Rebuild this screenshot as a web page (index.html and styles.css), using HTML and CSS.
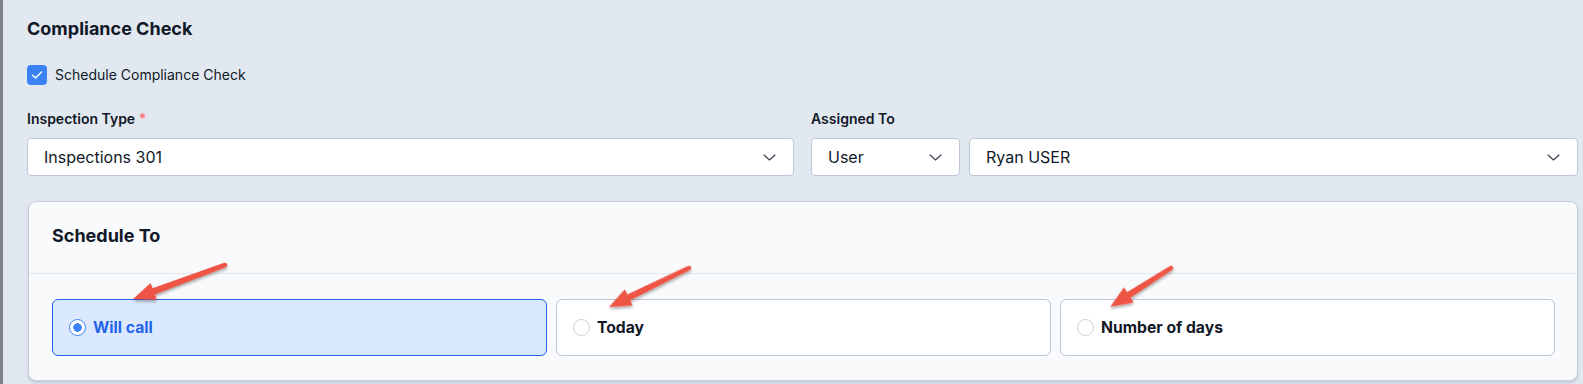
FILE: index.html
```html
<!DOCTYPE html>
<html lang="en">
<head>
    <meta charset="UTF-8">
    <title>Compliance Check</title>
    <link rel="stylesheet" href="styles.css">
</head>
<body>
    <div class="page">
        <h2 class="title">Compliance Check</h2>

        <label class="check-row">
            <span class="checkbox">
                <svg width="12" height="10" viewBox="0 0 12 10"><path d="M1.5 5.2 L4.6 8 L10.5 2" fill="none" stroke="#fff" stroke-width="1.4" stroke-linecap="round" stroke-linejoin="round"/></svg>
            </span>
            Schedule Compliance Check
        </label>

        <div class="fields">
            <div class="field">
                <div class="field-label">Inspection Type <span class="req">*</span></div>
                <div class="select">
                    <span>Inspections 301</span>
                    <svg class="chev" width="13" height="7" viewBox="0 0 13 7"><path d="M0.7 0.7 L6.5 6 L12.3 0.7" fill="none" stroke="#374151" stroke-width="1.2"/></svg>
                </div>
            </div>
            <div class="field">
                <div class="field-label">Assigned To</div>
                <div class="assign">
                    <div class="select select-small">
                        <span>User</span>
                        <svg class="chev" width="13" height="7" viewBox="0 0 13 7"><path d="M0.7 0.7 L6.5 6 L12.3 0.7" fill="none" stroke="#374151" stroke-width="1.2"/></svg>
                    </div>
                    <div class="select select-grow">
                        <span>Ryan USER</span>
                        <svg class="chev" width="13" height="7" viewBox="0 0 13 7"><path d="M0.7 0.7 L6.5 6 L12.3 0.7" fill="none" stroke="#374151" stroke-width="1.2"/></svg>
                    </div>
                </div>
            </div>
        </div>

        <div class="card">
            <div class="card-head">Schedule To</div>
            <div class="card-body">
                <div class="option active">
                    <span class="radio"></span>
                    <span>Will call</span>
                </div>
                <div class="option">
                    <span class="radio"></span>
                    <span>Today</span>
                </div>
                <div class="option">
                    <span class="radio"></span>
                    <span>Number of days</span>
                </div>
            </div>
        </div>
    </div>

    <!-- annotation arrows drawn over the screenshot, tail at origin pointing along +x -->
    <svg class="arrows" width="1583" height="384" viewBox="0 0 1583 384">
        <defs>
            <filter id="shadow" x="-20%" y="-40%" width="140%" height="180%">
                <feDropShadow dx="0" dy="2" stdDeviation="1.6" flood-color="#000" flood-opacity="0.35"/>
            </filter>
        </defs>
        <g filter="url(#shadow)" fill="#ef5445">
            <path transform="translate(225 265) rotate(159.7)" d="M0 -2.3 L76 -3.3 L76 -9 L98 0 L76 9 L76 3.3 L0 2.3 A2.3 2.3 0 0 1 0 -2.3 Z"/>
            <path transform="translate(689 268) rotate(154)" d="M0 -2.3 L67 -3.3 L67 -9 L89 0 L67 9 L67 3.3 L0 2.3 A2.3 2.3 0 0 1 0 -2.3 Z"/>
            <path transform="translate(1171 268) rotate(147.4)" d="M0 -2.3 L50 -3.3 L50 -9 L72 0 L50 9 L50 3.3 L0 2.3 A2.3 2.3 0 0 1 0 -2.3 Z"/>
        </g>
    </svg>
</body>
</html>
```

FILE: styles.css
```css
body {
    margin: 0;
    background-color: #e2e8f0;
    font-family: Inter, "Noto Sans", sans-serif;
    color: #111827;
    overflow: hidden;
}

.page {
    border-left: 3px solid #7d828c;
    padding: 17px 5px 0 24px;
    min-height: 384px;
    box-sizing: border-box;
}

.title {
    margin: 0;
    font-size: 18px;
    line-height: 24px;
    font-weight: 700;
}

.check-row {
    display: flex;
    align-items: center;
    gap: 8px;
    margin-top: 24px;
    font-size: 14px;
    line-height: 20px;
}

.checkbox {
    width: 20px;
    height: 20px;
    border-radius: 4px;
    background-color: #3b82f6;
    display: flex;
    align-items: center;
    justify-content: center;
}

.fields {
    display: grid;
    grid-template-columns: 1fr 1fr;
    gap: 17px;
    margin-top: 24px;
}

.field-label {
    font-size: 14px;
    line-height: 20px;
    font-weight: 600;
    margin-bottom: 9px;
}

.req {
    color: #f87171;
}

.select {
    height: 38px;
    box-sizing: border-box;
    background-color: #fff;
    border: 1px solid #bcc7d8;
    border-radius: 4px;
    padding: 0 17px 0 16px;
    display: flex;
    align-items: center;
    justify-content: space-between;
    font-size: 16px;
}

.chev {
    margin-top: 1px;
}

.assign {
    display: flex;
    gap: 9px;
}

.select-small {
    width: 149px;
}

.select-grow {
    flex: 1;
}

.card {
    margin-top: 25px;
    margin-left: 1px;
    background-color: #f8fafc;
    border: 1px solid #c3cddd;
    border-radius: 8px;
    box-shadow: 0 2px 3px rgba(30, 41, 59, 0.15);
}

.card-head {
    padding: 22px 23px 25px;
    font-size: 18px;
    line-height: 24px;
    font-weight: 700;
    border-bottom: 1px solid #e2e8f0;
}

.card-body {
    padding: 25px 22px 24px 23px;
    display: grid;
    grid-template-columns: 1fr 1fr 1fr;
    gap: 9px;
}

.option {
    height: 57px;
    box-sizing: border-box;
    background-color: #fff;
    border: 1px solid #bcc7d8;
    border-radius: 6px;
    padding: 0 16px;
    display: flex;
    align-items: center;
    gap: 7px;
    font-size: 15.7px;
    font-weight: 700;
    color: #111827;
}

.radio {
    width: 17px;
    height: 17px;
    box-sizing: border-box;
    border: 1px solid #c7d0dd;
    border-radius: 50%;
    background-color: #fff;
}

.option.active {
    background-color: #dbe9fe;
    border-color: #2563eb;
    color: #2563eb;
}

.option.active .radio {
    border: 1.5px solid #3b82f6;
    background: radial-gradient(circle, #3b82f6 0 4px, #fff 4.5px);
}

.arrows {
    position: absolute;
    left: 0;
    top: 0;
    pointer-events: none;
}
```
